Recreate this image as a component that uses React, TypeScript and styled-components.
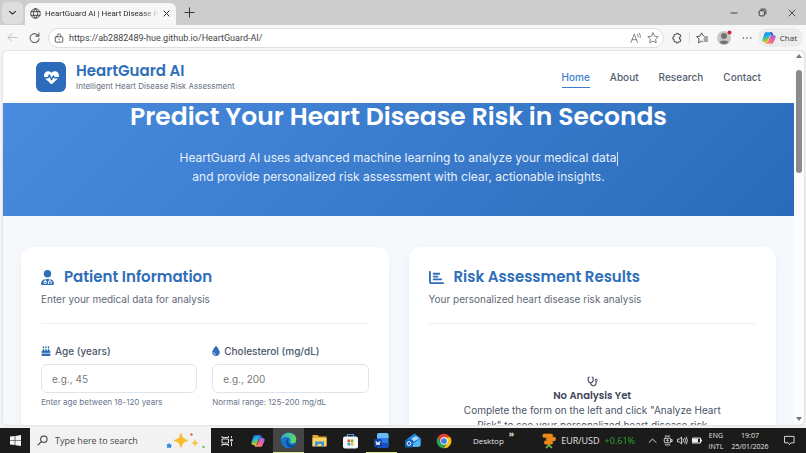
import React from "react";
import styled, { createGlobalStyle, css } from "styled-components";
import {
  FaCakeCandles,
  FaChartBar,
  FaDroplet,
  FaHeartPulse,
  FaStethoscope,
  FaUserDoctor,
} from "react-icons/fa6";

const ui = `"Open Sans", "Noto Sans", sans-serif`;
const chromeFont = `Roboto, "Open Sans", sans-serif`;
const body = `Inter, "Liberation Sans", sans-serif`;
const display = `Poppins, Inter, sans-serif`;

const GlobalStyle = createGlobalStyle`
  * { box-sizing: border-box; }
  html, body, #root { height: 100%; }
  body { margin: 0; overflow: hidden; background: #f3f3f3; font-family: ${body}; }
  button, input { font: inherit; color: inherit; border: 0; background: none; padding: 0; margin: 0; outline: 0; }
  h1, h2, h3, p { margin: 0; }
  a { color: inherit; text-decoration: none; }
  svg { display: block; flex: none; }
`;

const Desktop = styled.div`
  display: flex;
  flex-direction: column;
  height: 100vh;
`;

/* Browser chrome */

const TabStrip = styled.div`
  display: flex;
  flex: none;
  align-items: flex-end;
  height: 25px;
  padding-left: 2px;
  background: #cdcdcd;
  font-family: ${chromeFont};
  color: #2b2b2b;
`;

const TabListButton = styled.button`
  display: grid;
  place-items: center;
  width: 21px;
  height: 22px;
  margin-right: 2px;
  border-radius: 5px;
  background: #dedede;
  align-self: center;
`;

const Tab = styled.div`
  display: flex;
  align-items: center;
  gap: 4px;
  width: 151px;
  height: 22px;
  padding: 0 6px 2px 5px;
  border-radius: 6px 6px 0 0;
  background: #f7f7f7;
  font-size: 8px;
`;

const TabTitle = styled.span`
  flex: 1;
  overflow: hidden;
  white-space: nowrap;
  mask-image: linear-gradient(90deg, #000 85%, transparent);
`;

const IconButton = styled.button<{ $w?: number }>`
  display: grid;
  place-items: center;
  flex: none;
  width: ${(p) => p.$w ?? 20}px;
  height: 100%;
`;

const Spacer = styled.div`
  flex: 1;
`;

const Toolbar = styled.div`
  display: flex;
  flex: none;
  align-items: center;
  height: 25px;
  padding: 0 3px 0 2px;
  background: #f7f7f7;
  color: #555;
  font-family: ${chromeFont};
`;

const AddressBar = styled.div`
  display: flex;
  flex: 1;
  align-items: center;
  gap: 5px;
  height: 20px;
  margin: 0 2px;
  padding: 0 4px 0 5px;
  border: 1px solid #dedede;
  border-radius: 10px;
  background: #fff;
`;

const AddressInput = styled.input`
  flex: 1;
  min-width: 0;
  font-size: 9px;
  color: #444;
`;

const AddressAction = styled.button`
  color: #777;
`;

const Divider = styled.span`
  width: 1px;
  height: 11px;
  margin: 0 1px;
  background: #ddd;
`;

const ChatButton = styled.button`
  display: flex;
  align-items: center;
  gap: 4px;
  height: 19px;
  padding: 0 6px 0 4px;
  border-radius: 10px;
  background: #ececec;
  font-family: ${ui};
  font-size: 8px;
  color: #333;
`;

/* Web page */

const Viewport = styled.div`
  display: flex;
  flex: 1;
  min-height: 0;
  margin: 1px 2px 3px 3px;
  overflow: hidden;
  border-radius: 5px;
  background: #fcfcfc;
  box-shadow: 0 0 2px #bbb;
`;

const Page = styled.div`
  display: flex;
  flex: 1;
  flex-direction: column;
  min-width: 0;
  overflow: hidden;
  background: #f6f9fc;
`;

const ScrollTrack = styled.div`
  display: flex;
  flex: none;
  flex-direction: column;
  align-items: center;
  justify-content: space-between;
  width: 10px;
  padding: 3px 0 4px;
`;

const ScrollThumb = styled.div`
  width: 6px;
  height: 28%;
  margin: 12px 0 auto;
  border-radius: 3px;
  background: #8b8b8b;
`;

const SiteHeader = styled.header`
  display: flex;
  flex: none;
  align-items: center;
  justify-content: space-between;
  height: 52px;
  padding: 0 33px;
  background: #fff;
`;

const Brand = styled.a`
  display: flex;
  align-items: center;
  gap: 10px;
`;

const BrandMark = styled.span`
  display: grid;
  place-items: center;
  width: 30px;
  height: 30px;
  border-radius: 6px;
  background: #2c6cbb;
  color: #fff;
`;

const BrandName = styled.strong`
  display: block;
  font: 600 15px/18px ${display};
  color: #2f6eb9;
`;

const BrandTagline = styled.span`
  display: block;
  font-size: 8px;
  line-height: 12px;
  color: #667080;
`;

const Nav = styled.nav`
  display: flex;
  gap: 20px;
  font-size: 10px;
  font-weight: 500;
  line-height: 20px;
  color: #525e70;
`;

const NavLink = styled.a<{ $active?: boolean }>`
  border-bottom: 1px solid transparent;
  ${(p) =>
    p.$active &&
    css`
      color: #3d7dcc;
      border-color: #3d7dcc;
    `}
`;

const Hero = styled.section`
  flex: none;
  padding: 0 20px 30px;
  background: linear-gradient(135deg, #4a8bdf, #2a6bb9);
  color: #fff;
  text-align: center;
`;

const HeroTitle = styled.h1`
  font: 600 25px/28px ${display};
`;

const HeroText = styled.p`
  margin-top: 17px;
  font-size: 12px;
  line-height: 19px;
  color: #e7f0fb;
`;

const HeroLine = styled.span`
  display: block;
`;

const Caret = styled.span`
  display: inline-block;
  width: 1px;
  height: 14px;
  vertical-align: middle;
  background: #d5e4f5;
`;

const Columns = styled.main`
  display: grid;
  grid-template-columns: 1fr 1fr;
  flex: 1;
  gap: 20px;
  min-height: 0;
  padding: 31px 18px 0;
`;

const Card = styled.section`
  padding: 20px 20px 0;
  border-radius: 12px 12px 0 0;
  background: #fff;
  box-shadow: 0 3px 12px rgba(40, 80, 130, 0.05);
`;

const CardHeader = styled.header`
  padding-bottom: 15px;
  border-bottom: 1px solid #edf0f3;
`;

const CardTitle = styled.h2`
  display: flex;
  align-items: center;
  gap: 10px;
  font: 600 15px/20px ${display};
  color: #2f6eb9;
`;

const CardText = styled.p`
  margin-top: 3px;
  font-size: 10px;
  line-height: 18px;
  color: #5f6a76;
`;

const Fields = styled.form`
  display: grid;
  grid-template-columns: 1fr 1fr;
  gap: 15px;
  padding-top: 19px;
`;

const Label = styled.label`
  display: flex;
  align-items: center;
  gap: 4px;
  font-size: 10px;
  font-weight: 500;
  line-height: 16px;
  color: #4b5768;
  svg { color: #2f6eb9; }
`;

const TextBox = styled.input`
  display: block;
  width: 100%;
  height: 29px;
  margin-top: 5px;
  padding: 0 10px;
  border: 1px solid #dde5ec;
  border-radius: 6px;
  font-size: 10px;
  &::placeholder { color: #7a7a7a; opacity: 1; }
`;

const Hint = styled.small`
  display: block;
  margin-top: 3px;
  font-size: 8px;
  line-height: 12px;
  color: #69768a;
`;

const EmptyState = styled.div`
  display: flex;
  flex-direction: column;
  align-items: center;
  padding: 52px 30px 0;
  color: #4b5568;
  text-align: center;
`;

const EmptyTitle = styled.h3`
  margin-top: 1px;
  font: 600 10px/15px ${display};
  color: #3c4656;
`;

const EmptyText = styled.p`
  font-size: 10px;
  line-height: 15px;
`;

const DoctorIcon = styled(FaUserDoctor)`
  width: 13px;
  height: 15px;
`;

const DropIcon = styled(FaDroplet)`
  width: 8px;
  height: 10px;
`;

/* Taskbar */

const Taskbar = styled.footer`
  display: flex;
  flex: none;
  align-items: stretch;
  height: 25px;
  background: #1b1b1b;
  color: #e4e4e4;
  font-family: ${ui};
  font-size: 8px;
`;

const StartButton = styled.button`
  display: grid;
  place-items: center;
  width: 30px;
`;

const SearchBox = styled.label`
  display: flex;
  align-items: center;
  gap: 7px;
  width: 181px;
  padding: 0 5px 0 7px;
  background: #f2f2f2;
  color: #333;
`;

const SearchInput = styled.input`
  flex: 1;
  min-width: 0;
  font-size: 9px;
  &::placeholder { color: #484848; opacity: 1; }
`;

const AppButton = styled.button<{ $active?: boolean; $running?: boolean }>`
  display: grid;
  place-items: center;
  width: 31px;
  background: ${(p) => (p.$active ? "#454545" : "transparent")};
  box-shadow: ${(p) => (p.$active || p.$running ? "inset 0 -1px #dbe88f" : "none")};
`;

const TrayText = styled.button<{ $size?: number }>`
  display: flex;
  align-items: center;
  gap: 5px;
  font-size: ${(p) => p.$size ?? 8}px;
`;

const More = styled.span`
  align-self: flex-start;
  font-size: 9px;
  font-weight: 700;
  line-height: 12px;
`;

const Gain = styled.span`
  color: #2aa52a;
`;

const TrayIcons = styled.div`
  display: flex;
  align-items: center;
  margin-left: 10px;
`;

const Stack = styled.button<{ $w: number }>`
  width: ${(p) => p.$w}px;
  font-size: 7px;
  line-height: 11px;
  white-space: nowrap;
`;

/* Drawings */

const Line = ({ size = 10, w = 1, d }: { size?: number; w?: number; d: string }) => (
  <svg width={size} height={size} viewBox="0 0 12 12" fill="none" stroke="currentColor" strokeWidth={w} strokeLinecap="round" strokeLinejoin="round">
    <path d={d} />
  </svg>
);

const Copilot = ({ id, size = 15 }: { id: string; size?: number }) => (
  <svg width={size} height={size} viewBox="0 0 24 24">
    <defs>
      <linearGradient id={id + "a"} x1="0" y1="0" x2="0.4" y2="1">
        <stop offset="0" stopColor="#2270e8" />
        <stop offset=".5" stopColor="#21b5df" />
        <stop offset=".75" stopColor="#79c84b" />
        <stop offset="1" stopColor="#f5c52c" />
      </linearGradient>
      <linearGradient id={id + "b"} x1="0.8" y1="0" x2="0.2" y2="1">
        <stop offset="0" stopColor="#9d67ef" />
        <stop offset=".5" stopColor="#ef5f9d" />
        <stop offset="1" stopColor="#ff9451" />
      </linearGradient>
    </defs>
    <path fill={`url(#${id}a)`} d="M7 2h8c2 0 3 1 3.500 3l.6 2h-3c-2 0-3 1-3.500 3l-2 6c-.6 2-1.600 3-3.600 3H4c-3 0-4-2-3-5l3-9c.7-2 1.500-3 3-3z" />
    <path fill={`url(#${id}b)`} d="M17 22H9c-2 0-3-1-3.500-3H8c2 0 3-1 3.600-3l2-6c.6-2 1.600-3 3.600-3H20c3 0 4 2 3 5l-3 7c-.7 2-1.500 3-3 3z" />
    <path fill="#2656cf" d="M14 2h1c2 0 3 1 3.500 3l.6 2h-3z" />
  </svg>
);

const Globe = () => (
  <Line size={11} w={0.9} d="M6 .8a5.200 5.200 0 1 0 0 10.400A5.200 5.200 0 1 0 6 .8M6 .8c-3 3-3 7.400 0 10.400 3-3 3-7.400 0-10.400M1.300 4h9.400M1.300 8h9.400" />
);

const Profile = () => (
  <svg width="17" height="17" viewBox="0 0 17 17">
    <circle cx="8" cy="9" r="7" fill="#cbc7c3" />
    <circle cx="8" cy="7" r="3" fill="#77726e" />
    <path d="M3.500 13.500C4 10.800 12 10.800 12.500 13.500A7 7 0 0 1 3.500 13.500" fill="#77726e" />
    <circle cx="13.500" cy="3.500" r="2" fill="#d3203a" />
  </svg>
);

const Windows = () => (
  <svg width="11" height="11" viewBox="0 0 11 11" fill="#f4f4f4">
    <path d="M0 1.600 4.700 1v4.200H0zM5.300.9 11 0v5.200H5.300zM0 5.800h4.700V10L0 9.400zM5.300 5.800H11V11l-5.700-.8z" />
  </svg>
);

const Sparkles = () => (
  <svg width="40" height="20" viewBox="0 0 40 20">
    <path fill="#f8bd2c" stroke="#f8bd2c" strokeLinejoin="round" d="M15 2.500c1.200 4.500 2.500 5.800 7 7-4.500 1.200-5.800 2.500-7 7-1.200-4.500-2.500-5.800-7-7 4.500-1.200 5.800-2.500 7-7z" />
    <path fill="#f7c64a" d="M29 8c.8 2.600 1.300 3.200 4 4-2.700.8-3.200 1.400-4 4-.8-2.600-1.300-3.200-4-4 2.700-.8 3.200-1.400 4-4z" />
    <path fill="#2b8fe0" d="m3 12 1.300 1.500L6 14l-1 1.300.2 2L3 16.500l-2 .7.300-2L.5 13.500 2.300 13z" />
    <circle cx="25.500" cy="3.500" r="1.200" fill="#e2614d" />
    <circle cx="37.500" cy="16" r="1.200" fill="#6cbb63" />
  </svg>
);

const TaskView = () => (
  <svg width="12" height="12" viewBox="0 0 12 12" fill="none" stroke="#ddd" strokeWidth="1">
    <path d="M1 1v1.500h6.500V1M1 11V9.500h6.500V11M1 4h6.500v4H1zM10.500 1v2M10.500 7v4" />
    <path d="M9.700 4.500h1.600v1.500H9.700z" fill="#ddd" />
  </svg>
);

const Edge = () => (
  <svg width="17" height="17" viewBox="0 0 24 24">
    <defs>
      <linearGradient id="eg" x1="0" y1="0" x2="1" y2="0.300">
        <stop offset="0" stopColor="#2ba8e0" />
        <stop offset="1" stopColor="#5cd66a" />
      </linearGradient>
    </defs>
    <circle cx="12" cy="12" r="11" fill="#1575c8" />
    <path fill="url(#eg)" d="M1 11C2 4.500 7 1 12.500 1 19 1 23 5.500 23 10.500c0 3.500-2.500 5.500-5.500 5.500-2 0-3.500-.6-3.500-1.400 0-.6 1-1 1-2.800C15 9 12 7 8.500 7 5 7 2 8.500 1 11z" />
    <path fill="#0d4c9b" d="M9 12c-2 5 2 10 7 10 2.500-.5 4.500-2 6-4.500-5 2.500-10.500.5-11-4 0-2 .5-3 1.500-3.700C11 9.600 9.500 10.500 9 12z" />
  </svg>
);

const Folder = () => (
  <svg width="15" height="13" viewBox="0 0 15 13">
    <path fill="#e3a72f" d="M.5 1h5L7 2.500h7.500V12H.5z" />
    <path fill="#f9d467" d="M.5 4h14v8.500H.5z" />
    <path fill="#3d93db" d="M3 7.500h9v5h-2.500V10h-4v2.500H3z" />
  </svg>
);

const Store = () => (
  <svg width="15" height="16" viewBox="0 0 15 16">
    <path d="M4.500 4V1.500h6V4" fill="none" stroke="#39a6e8" strokeWidth="1.200" />
    <rect y="3.500" width="15" height="12" rx="2" fill="#f5f7f8" />
    <path fill="#e5502e" d="M4.500 6.500h2.700v2.700H4.500z" />
    <path fill="#7cb82f" d="M7.800 6.500h2.700v2.700H7.800z" />
    <path fill="#2c9fe2" d="M4.500 9.800h2.700v2.700H4.500z" />
    <path fill="#f4b62a" d="M7.800 9.800h2.700v2.700H7.800z" />
  </svg>
);

const Word = () => (
  <svg width="15" height="15" viewBox="0 0 15 15">
    <rect x="3" y="0" width="11.500" height="15" rx="2" fill="#2b7de6" />
    <path d="M3 2c0-1 1-2 2-2h7.500c1 0 2 1 2 2v3H3z" fill="#67b9f7" />
    <path d="M3 10h11.500v3c0 1-1 2-2 2H5c-1 0-2-1-2-2z" fill="#1a4fc2" />
    <rect y="6" width="8" height="8" rx="1.500" fill="#1746a8" />
    <path d="m2 8 1 4 1-3 1 3 1-4" fill="none" stroke="#fff" strokeWidth=".9" />
  </svg>
);

const Outlook = () => (
  <svg width="16" height="15" viewBox="0 0 16 15">
    <path fill="#2384df" d="M2 6 9.500.5 15.500 5v7c0 1-1 2-2 2H4c-1 0-2-1-2-2z" />
    <path fill="#a9d8fb" d="M6 6 11 3l3 2.500-5 3z" />
    <path fill="#55b5f5" d="m15.500 5.500-11 8c3 1 11 1 11-1.500z" />
    <rect y="6.500" width="8" height="8" rx="1.500" fill="#1362bf" />
    <circle cx="4" cy="10.500" r="1.900" fill="none" stroke="#fff" />
  </svg>
);

const Chrome = () => (
  <svg width="16" height="16" viewBox="0 0 24 24">
    <path fill="#e34133" d="M2.500 6.500a11 11 0 0 1 19 0H12L7 14.500z" />
    <path fill="#fbc116" d="M21.500 6.500A11 11 0 0 1 11.500 23l5-8.500L12 6.500z" />
    <path fill="#2da24f" d="M2.500 6.500 7.300 15H16.500L11.500 23A11 11 0 0 1 2.500 6.500z" />
    <circle cx="12" cy="12" r="5.500" fill="#fff" />
    <circle cx="12" cy="12" r="4.300" fill="#3b7fe9" />
  </svg>
);

const Coins = () => (
  <svg width="14" height="16" viewBox="0 0 14 16">
    <g fill="#f08a1c" stroke="#c96a10" strokeWidth=".3">
      <rect x="2" y="7.500" width="9" height="4" rx="2" />
      <rect x="4" y="4" width="10" height="4" rx="2" />
      <rect x=".5" y=".8" width="10.500" height="4" rx="2" />
    </g>
    <path d="m4 15 3-2.800 3 2.800" fill="none" stroke="#79c143" strokeWidth="1.600" />
  </svg>
);

const ReadAloudIcon = () => (
  <svg width="12" height="12" viewBox="0 0 12 12" fill="none" stroke="currentColor" strokeWidth=".9" strokeLinecap="round">
    <path d="M1 10.500 4.300 2l3.200 8.500M2.100 7.700h4.400M7.500 2.300q.9 1 .6 2.500M9.300 1.200q1.600 1.800 1 4.400" />
  </svg>
);

const Triangle = ({ down }: { down?: boolean }) => (
  <svg width="6" height="4" viewBox="0 0 6 4" fill="#777">
    <path d={down ? "M0 0h6L3 4z" : "M0 4h6L3 0z"} />
  </svg>
);

const navItems = ["Home", "About", "Research", "Contact"];

const fields = [
  { id: "age", label: "Age (years)", icon: <FaCakeCandles size={10} />, placeholder: "e.g., 45", hint: "Enter age between 18-120 years" },
  { id: "chol", label: "Cholesterol (mg/dL)", icon: <DropIcon />, placeholder: "e.g., 200", hint: "Normal range: 125-200 mg/dL" },
];

const apps = [
  { name: "Task View", icon: <TaskView /> },
  { name: "Copilot", icon: <Copilot id="task" size={14} /> },
  { name: "Edge", icon: <Edge />, active: true },
  { name: "File Explorer", icon: <Folder /> },
  { name: "Store", icon: <Store /> },
  { name: "Word", icon: <Word />, running: true },
  { name: "Outlook", icon: <Outlook /> },
  { name: "Chrome", icon: <Chrome /> },
];

export default function App() {
  return (
    <Desktop>
      <GlobalStyle />
      <TabStrip>
        <TabListButton aria-label="Tab list"><Line size={9} w={1.4} d="M2 4.500 6 8l4-3.500" /></TabListButton>
        <Tab>
          <Globe />
          <TabTitle>HeartGuard AI | Heart Disease Risk</TabTitle>
          <button aria-label="Close tab"><Line size={7} w={1.7} d="m1.500 1.500 9 9m0-9-9 9" /></button>
        </Tab>
        <IconButton $w={26} aria-label="New tab"><Line size={11} d="M6 1v10M1 6h10" /></IconButton>
        <Spacer />
        <IconButton $w={29} aria-label="Minimize"><Line size={8} w={1.3} d="M1.500 6h9" /></IconButton>
        <IconButton $w={29} aria-label="Restore"><Line size={9} w={1.2} d="M1.500 4.500q0-1 1-1h5q1 0 1 1v5q0 1-1 1h-5q-1 0-1-1zM4 1.500h5q1.500 0 1.500 1.500v5" /></IconButton>
        <IconButton $w={29} aria-label="Close"><Line size={8} w={1.2} d="m1.500 1.500 9 9m0-9-9 9" /></IconButton>
      </TabStrip>

      <Toolbar>
        <IconButton $w={21} aria-label="Back">
          <svg width="11" height="11" viewBox="0 0 12 12" fill="none" stroke="#bdbdbd"><path d="M11.500 6H1m4.500-4.500L1 6l4.500 4.500" /></svg>
        </IconButton>
        <IconButton $w={23} aria-label="Refresh"><Line size={11} w={1.1} d="M10.500 4.500A4.900 4.900 0 1 0 11 7M10.800 1.200v3.300H7.500" /></IconButton>
        <AddressBar>
          <Line size={10} w={1.1} d="M2.500 4.500h7q1 0 1 1v4.500q0 1-1 1h-7q-1 0-1-1V5.500q0-1 1-1zM4 4.500V3a2 2 0 0 1 4 0v1.500M6 7.300v.8" />
          <AddressInput aria-label="Address" defaultValue="https://ab2882489-hue.github.io/HeartGuard-AI/" />
          <AddressAction aria-label="Read aloud"><ReadAloudIcon /></AddressAction>
          <AddressAction aria-label="Add to favorites"><Line size={12} w={0.9} d="m6 .9 1.600 3.300 3.600.5-2.600 2.500.6 3.600L6 9.100l-3.200 1.700.6-3.600L.8 4.700l3.600-.5z" /></AddressAction>
        </AddressBar>
        <IconButton $w={22} aria-label="Extensions"><Line size={12} w={1.1} d="M4 2.500h1a1.300 1.300 0 0 1 2.600 0h1q1 0 1 1v1.300a1.300 1.300 0 0 0 0 2.600v1.300q0 1-1 1h-1a1.300 1.300 0 0 1-2.600 0H4q-1 0-1-1V7.400a1.300 1.300 0 0 1 0-2.600V3.500q0-1 1-1z" /></IconButton>
        <Divider />
        <IconButton $w={23} aria-label="Favorites"><Line size={12} w={1} d="M7.500 4 5.500.9 4 4.200l-3.400.5 2.500 2.400-.6 3.700 3-1.600 1 .6M8.500 5h3M8 7h3.500M8 9h3.500" /></IconButton>
        <IconButton $w={22} aria-label="Profile"><Profile /></IconButton>
        <IconButton $w={22} aria-label="More"><Line size={10} w={2} d="M1.500 6h.01M6 6h.01M10.500 6h.01" /></IconButton>
        <ChatButton><Copilot id="chat" size={14} />Chat</ChatButton>
      </Toolbar>

      <Viewport>
        <Page>
          <SiteHeader>
            <Brand href="#">
              <BrandMark><FaHeartPulse size={15} /></BrandMark>
              <span>
                <BrandName>HeartGuard AI</BrandName>
                <BrandTagline>Intelligent Heart Disease Risk Assessment</BrandTagline>
              </span>
            </Brand>
            <Nav>
              {navItems.map((item, i) => (
                <NavLink key={item} href="#" $active={i === 0}>{item}</NavLink>
              ))}
            </Nav>
          </SiteHeader>
          <Hero>
            <HeroTitle>Predict Your Heart Disease Risk in Seconds</HeroTitle>
            <HeroText>
              <HeroLine>HeartGuard AI uses advanced machine learning to analyze your medical data<Caret /></HeroLine>
              <HeroLine>and provide personalized risk assessment with clear, actionable insights.</HeroLine>
            </HeroText>
          </Hero>
          <Columns>
            <Card>
              <CardHeader>
                <CardTitle><DoctorIcon />Patient Information</CardTitle>
                <CardText>Enter your medical data for analysis</CardText>
              </CardHeader>
              <Fields>
                {fields.map((f) => (
                  <div key={f.id}>
                    <Label htmlFor={f.id}>{f.icon}{f.label}</Label>
                    <TextBox id={f.id} placeholder={f.placeholder} />
                    <Hint>{f.hint}</Hint>
                  </div>
                ))}
              </Fields>
            </Card>
            <Card>
              <CardHeader>
                <CardTitle><FaChartBar size={15} />Risk Assessment Results</CardTitle>
                <CardText>Your personalized heart disease risk analysis</CardText>
              </CardHeader>
              <EmptyState>
                <FaStethoscope size={11} />
                <EmptyTitle>No Analysis Yet</EmptyTitle>
                <EmptyText>Complete the form on the left and click "Analyze Heart Risk" to see your personalized heart disease risk</EmptyText>
              </EmptyState>
            </Card>
          </Columns>
        </Page>
        <ScrollTrack>
          <Triangle />
          <ScrollThumb />
          <Triangle down />
        </ScrollTrack>
      </Viewport>

      <Taskbar>
        <StartButton aria-label="Start"><Windows /></StartButton>
        <SearchBox>
          <Line size={11} w={1.1} d="M7.500 1a3.500 3.500 0 1 0 0 7 3.500 3.500 0 1 0 0-7M5 7 1 11" />
          <SearchInput aria-label="Search" placeholder="Type here to search" />
          <Sparkles />
        </SearchBox>
        {apps.map((a) => (
          <AppButton key={a.name} aria-label={a.name} $active={a.active} $running={a.running}>{a.icon}</AppButton>
        ))}
        <Spacer />
        <TrayText>Desktop<More>»</More></TrayText>
        <Spacer />
        <Spacer />
        <TrayText $size={9}><Coins />EUR/USD <Gain>+0.61%</Gain></TrayText>
        <TrayIcons>
          <IconButton $w={15} aria-label="Hidden icons"><Line size={9} w={1.3} d="m1.500 8.500 4.500-4.500 4.500 4.500" /></IconButton>
          <IconButton $w={15} aria-label="Meet now"><Line size={11} d="M3.500 3.500h5q1 0 1 1v3q0 1-1 1h-5q-1 0-1-1v-3q0-1 1-1zM3.500 1.200h5M3.500 10.800h5M9.500 5.500 11 4.800v2.500l-1.500-.6M6 5.200a.8.8 0 1 0 .01 0" /></IconButton>
          <IconButton $w={15} aria-label="Volume"><Line size={11} d="M1 4.500h1.500L5 2.200v7.600L2.500 7.500H1zM6.800 4.500q1 1.500 0 3M8.500 3.300q2 2.700 0 5.400M10.200 2.200q2.500 3.800 0 7.600" /></IconButton>
          <IconButton $w={15} aria-label="Battery">
            <svg width="10" height="7" viewBox="0 0 10 7" fill="none" stroke="#eee"><path d="M.5 1h8v5h-8zM9.500 2.500v2" /><path d="M1.500 2h4v3h-4z" fill="#eee" /></svg>
          </IconButton>
        </TrayIcons>
        <Stack $w={22}>ENG<br />INTL</Stack>
        <Stack $w={46}>19:07<br />25/01/2026</Stack>
        <IconButton $w={33} aria-label="Notifications"><Line size={11} d="M1 1.500h10v7H7.500L6 10.500l-1.500-2H1z" /></IconButton>
      </Taskbar>
    </Desktop>
  );
}
